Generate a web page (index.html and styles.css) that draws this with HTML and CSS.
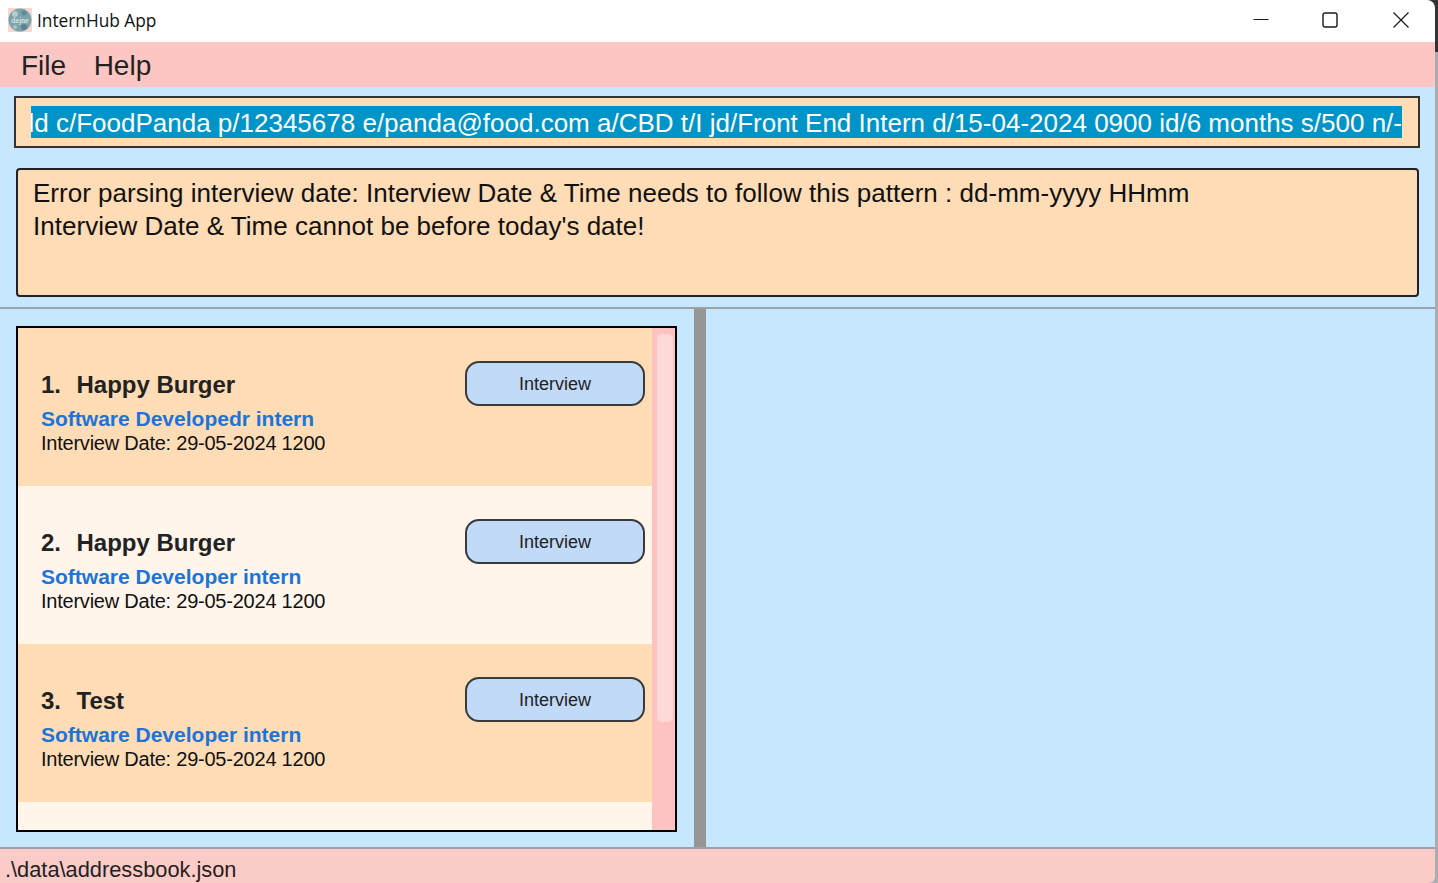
FILE: index.html
```html
<!DOCTYPE html>
<html lang="en">
<head>
<meta charset="utf-8">
<title>InternHub App</title>
<link rel="stylesheet" href="styles.css">
</head>
<body>
<div class="window">
  <div class="window-edge"></div>
  <header class="titlebar">
    <div class="app-title">
      <svg class="app-icon" width="24" height="24" viewBox="0 0 24 24">
        <rect width="24" height="24" fill="#f8d5cf"/>
        <circle cx="12" cy="12" r="11.5" fill="#7ba3aa"/>
        <circle cx="7" cy="6" r="3" fill="#b4cccd"/>
        <circle cx="16" cy="5" r="2.5" fill="#5d8a93"/>
        <circle cx="16" cy="19" r="3" fill="#58858f"/>
        <circle cx="7" cy="19" r="2" fill="#a9c6c8"/>
        <text x="12" y="15" text-anchor="middle" class="icon-text">dajne</text>
      </svg>
      <span>InternHub App</span>
    </div>
    <div class="window-controls">
      <svg class="ctl ctl-min" width="16" height="16" viewBox="0 0 16 16"><path d="M0.5 7.5H15.5" stroke="#1a1a1a" stroke-width="1" fill="none"/></svg>
      <svg class="ctl ctl-max" width="16" height="16" viewBox="0 0 16 16"><rect x="1" y="1" width="14" height="14" rx="2" stroke="#1a1a1a" stroke-width="1.4" fill="none"/></svg>
      <svg class="ctl ctl-close" width="16" height="16" viewBox="0 0 16 16"><path d="M0.5 0.5L15.5 15.5M15.5 0.5L0.5 15.5" stroke="#1a1a1a" stroke-width="1.2" fill="none"/></svg>
    </div>
  </header>

  <nav class="menubar">
    <span class="menu-item">File</span>
    <span class="menu-item">Help</span>
  </nav>

  <section class="top-area">
    <div class="command-box">
      <div class="command-clip"><span class="command-text">add c/FoodPanda p/12345678 e/panda@food.com a/CBD t/I jd/Front End Intern d/15-04-2024 0900 id/6 months s/500 n/-</span></div>
    </div>
    <div class="result-box">Error parsing interview date: Interview Date &amp; Time needs to follow this pattern : dd-mm-yyyy HHmm<br>Interview Date &amp; Time cannot be before today's date!</div>
  </section>

  <main class="split">
    <section class="left-pane">
      <div class="list">
        <div class="list-items">
          <article class="card card-odd">
            <div class="card-info">
              <h2 class="card-name"><span class="card-num">1.</span>Happy Burger</h2>
              <div class="card-role">Software Developedr intern</div>
              <div class="card-date">Interview Date: 29-05-2024 1200</div>
            </div>
            <span class="status">Interview</span>
          </article>
          <article class="card card-even">
            <div class="card-info">
              <h2 class="card-name"><span class="card-num">2.</span>Happy Burger</h2>
              <div class="card-role">Software Developer intern</div>
              <div class="card-date">Interview Date: 29-05-2024 1200</div>
            </div>
            <span class="status">Interview</span>
          </article>
          <article class="card card-odd">
            <div class="card-info">
              <h2 class="card-name"><span class="card-num">3.</span>Test</h2>
              <div class="card-role">Software Developer intern</div>
              <div class="card-date">Interview Date: 29-05-2024 1200</div>
            </div>
            <span class="status">Interview</span>
          </article>
          <div class="card-partial"></div>
        </div>
        <div class="scrollbar"><div class="thumb"></div></div>
      </div>
    </section>
    <div class="divider"></div>
    <section class="right-pane"></section>
  </main>

  <footer class="statusbar">.\data\addressbook.json</footer>
</div>
</body>
</html>
```
FILE: styles.css
```css
* { box-sizing: border-box; }
html, body { margin: 0; padding: 0; height: 100%; overflow: hidden; }
body { background: #fff; font-family: "Liberation Sans", Arial, sans-serif; color: #1a1a1a; }

.window {
  position: relative;
  width: 1438px;
  height: 883px;
  display: flex;
  flex-direction: column;
  padding-right: 3px;
  background: #a9adb0;
}
.window-edge {
  position: absolute;
  top: 0;
  right: 0;
  width: 12px;
  height: 52px;
  background: linear-gradient(to right, transparent 9px, #333 9px);
}
.window-edge::before {
  content: "";
  position: absolute;
  top: 0;
  left: 0;
  width: 9px;
  height: 9px;
  background: #333;
}

.titlebar {
  position: relative;
  height: 42px;
  flex: none;
  background: #fff;
  border-top-right-radius: 8px;
  display: flex;
  align-items: center;
  justify-content: space-between;
}
.app-title {
  display: flex;
  align-items: center;
  gap: 5px;
  padding-left: 8px;
  font-family: "Open Sans", "Noto Sans", sans-serif;
  font-size: 17.3px;
  color: #111;
  position: relative;
  top: -1px;
}
.app-icon { display: block; }
.icon-text { font-family: "Liberation Serif", serif; font-size: 8px; fill: #f2f2ea; }
.window-controls { display: flex; align-items: center; padding-right: 26px; position: relative; top: -1.5px; }
.ctl { display: block; }
.ctl-max { margin: 0 55px 0 53px; }

.menubar {
  position: relative;
  height: 45px;
  flex: none;
  background: #fcc6c3;
  display: flex;
  align-items: center;
  gap: 27.5px;
  padding: 2px 0 0 21px;
  font-size: 28px;
  color: #222;
}

.top-area {
  height: 222px;
  flex: none;
  background: #c7e6ff;
  padding: 9px 0 0 14px;
  border-bottom: 2px solid #9aa3aa;
}
.command-box {
  height: 52px;
  background: #fedcb5;
  border: 2px solid #333;
  padding: 8px 16px 0 15px;
  width: 1406px;
}
.command-clip {
  height: 32px;
  overflow: hidden;
  background: #0094c8;
  direction: rtl;
}
.command-text {
  color: #fff;
  font-size: 26px;
  line-height: 34px;
  white-space: nowrap;
  direction: ltr;
  unicode-bidi: bidi-override;
}

.result-box {
  margin: 20px 0 0 2px;
  width: 1403px;
  height: 129px;
  background: #fedcb5;
  border: 2px solid #222;
  border-radius: 4px;
  padding: 7px 15px;
  font-size: 26px;
  line-height: 33px;
  letter-spacing: 0.02px;
  color: #111;
}

.split {
  flex: 1;
  min-height: 0;
  display: flex;
  background: #c7e6ff;
}
.left-pane {
  width: 694px;
  flex: none;
  padding: 17px 17px 15px 16px;
  display: flex;
}
.list {
  width: 661px;
  height: 506px;
  border: 2px solid #000;
  display: flex;
  overflow: hidden;
}
.list-items { width: 634px; flex: none; display: flex; flex-direction: column; }

.card {
  height: 158px;
  flex: none;
  padding: 33px 7px 0 23px;
  display: flex;
  justify-content: space-between;
  align-items: flex-start;
}
.card-odd { background: #fedcb5; }
.card-even { background: #fff5eb; }
.card-partial { flex: 1; background: #fff5eb; }

.card-name {
  margin: 8px 0 0;
  font-size: 24px;
  font-weight: 700;
  line-height: 32px;
  color: #222;
}
.card-num { display: inline-block; width: 35.5px; }
.card-role {
  margin-top: 5px;
  font-size: 21px;
  font-weight: 700;
  line-height: 25px;
  color: #1c74d8;
}
.card-date { margin-top: 1px; font-size: 20px; line-height: 23px; color: #111; letter-spacing: -0.23px; }

.status {
  width: 180px;
  height: 45px;
  padding-top: 2px;
  background: #c0daf8;
  border: 2px solid #3a3a3a;
  border-radius: 14px;
  display: flex;
  align-items: center;
  justify-content: center;
  font-size: 18px;
  color: #222;
}

.scrollbar { width: 25px; flex: none; background: #fdc3c2; padding: 6px 4px 0 5px; }
.thumb { height: 388px; background: #fed9d8; border-radius: 5px; }

.divider { width: 12px; flex: none; background: #969696; }
.right-pane { flex: 1; background: #c7e6ff; }

.statusbar {
  height: 36px;
  flex: none;
  background: #fbcbc7;
  border-top: 2px solid #9aa3aa;
  border-bottom-right-radius: 6px;
  padding-left: 5px;
  font-size: 21.8px;
  line-height: 41px;
  color: #222;
  overflow: hidden;
}
```
